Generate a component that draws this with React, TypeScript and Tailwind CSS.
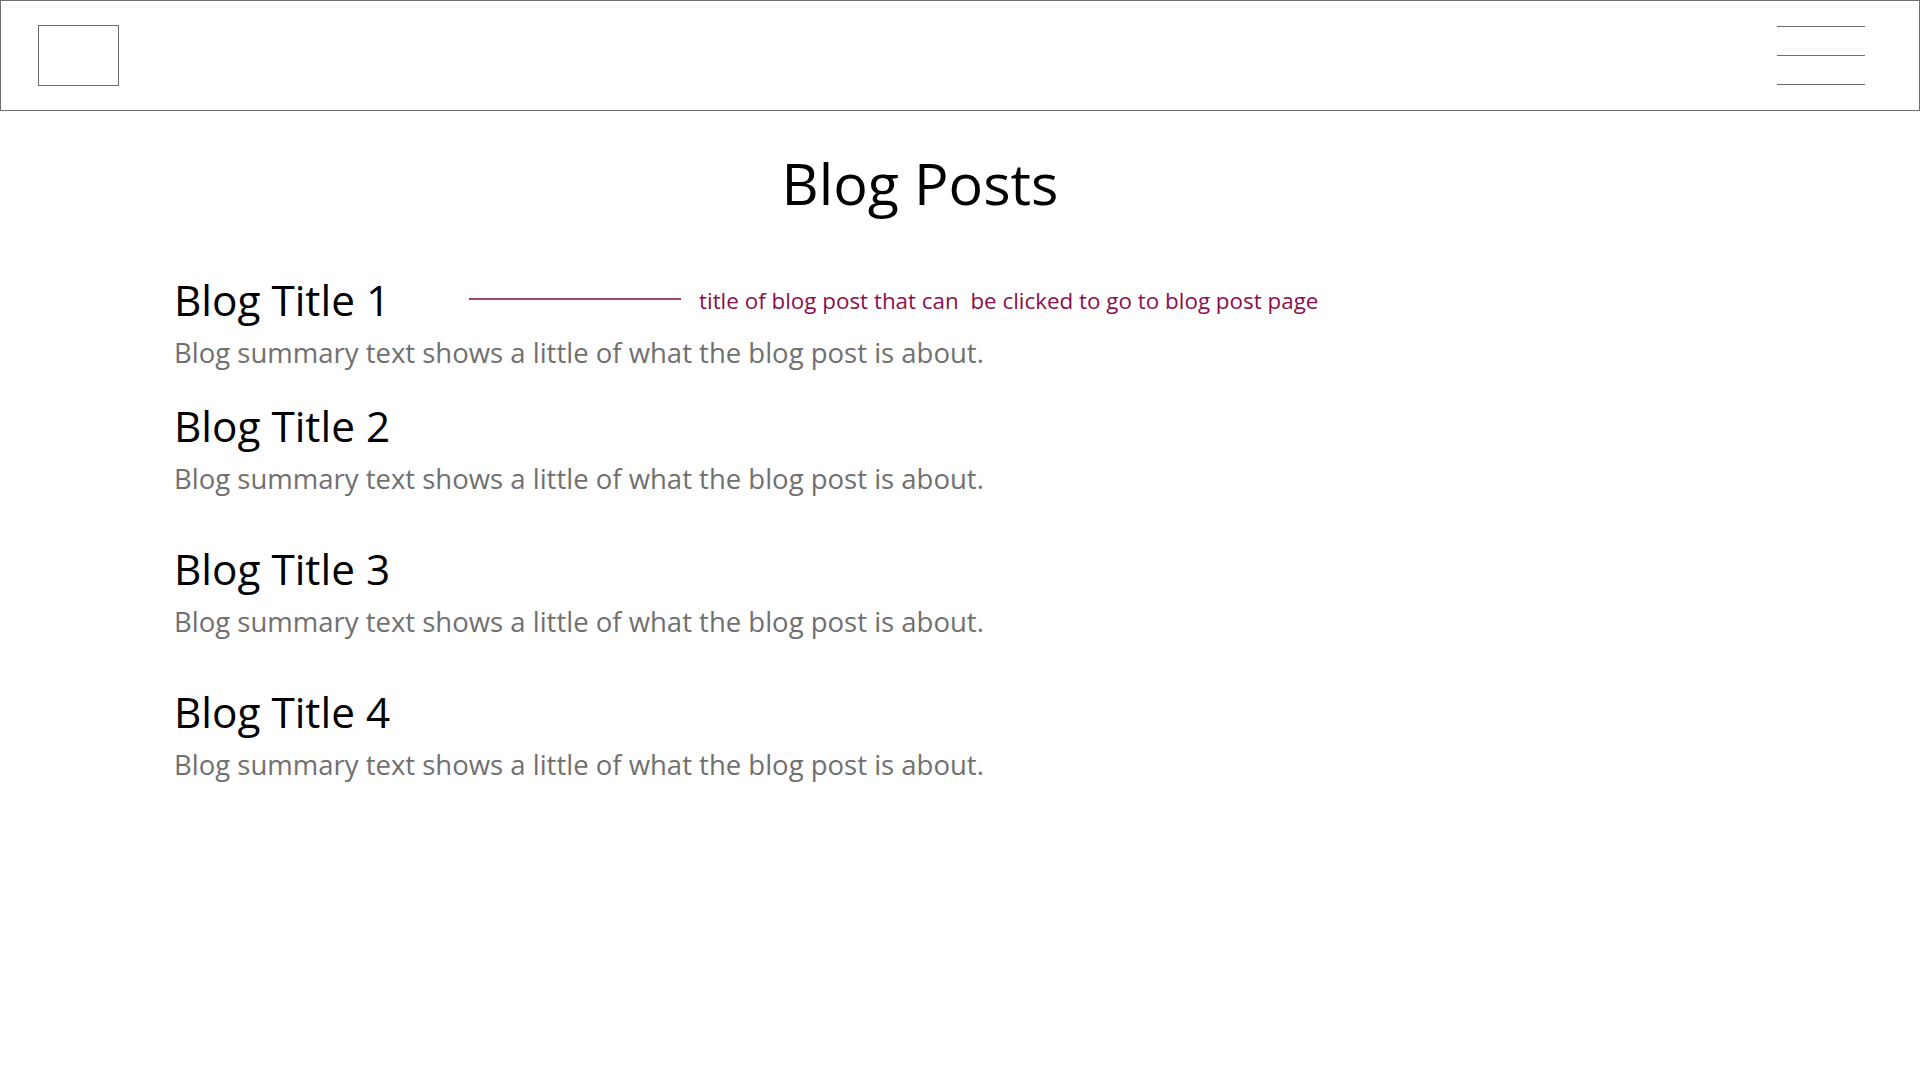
const posts = [1, 2, 3, 4];

const font = { fontFamily: '"Open Sans", "Noto Sans", sans-serif' };

export default function App() {
  return (
    <div className="min-h-screen w-full bg-white text-black" style={font}>
      {/* top bar wireframe */}
      <header className="flex h-[111px] items-center justify-between border border-[#6e6e6e] pl-[37px] pr-[54px]">
        <div className="h-[61px] w-[81px] border border-[#6e6e6e]" />
        <div className="flex w-[88px] flex-col gap-[28px]">
          <div className="h-px bg-[#6e6e6e]" />
          <div className="h-px bg-[#6e6e6e]" />
          <div className="h-px bg-[#6e6e6e]" />
        </div>
      </header>

      <main className="pl-[174px] pr-[254px]">
        <h1 className="mt-[38px] text-center text-[57.5px] leading-[68px] font-normal">Blog Posts</h1>

        <div className="mt-[53px] flex flex-col">
          {posts.map((n) => (
            <div key={n} className={n === 1 ? "relative" : n === 2 ? "relative mt-[20px]" : "relative mt-[37px]"}>
              <h2 className="text-[42.3px] leading-[60px] font-normal">Blog Title {n}</h2>
              <p className="text-[27.5px] leading-[46px] text-[#707070]">
                Blog summary text shows a little of what the blog post is about.
              </p>
              {n === 1 && (
                <div className="absolute left-[295px] top-[16px] flex h-[30px] items-center gap-[18px]">
                  <div className="mb-[4px] h-[2px] w-[212px] bg-[#a3446f]" />
                  <span className="whitespace-pre text-[22.4px] leading-[30px] text-[#8a0f4c]">
                    title of blog post that can  be clicked to go to blog post page
                  </span>
                </div>
              )}
            </div>
          ))}
        </div>
      </main>
    </div>
  );
}
